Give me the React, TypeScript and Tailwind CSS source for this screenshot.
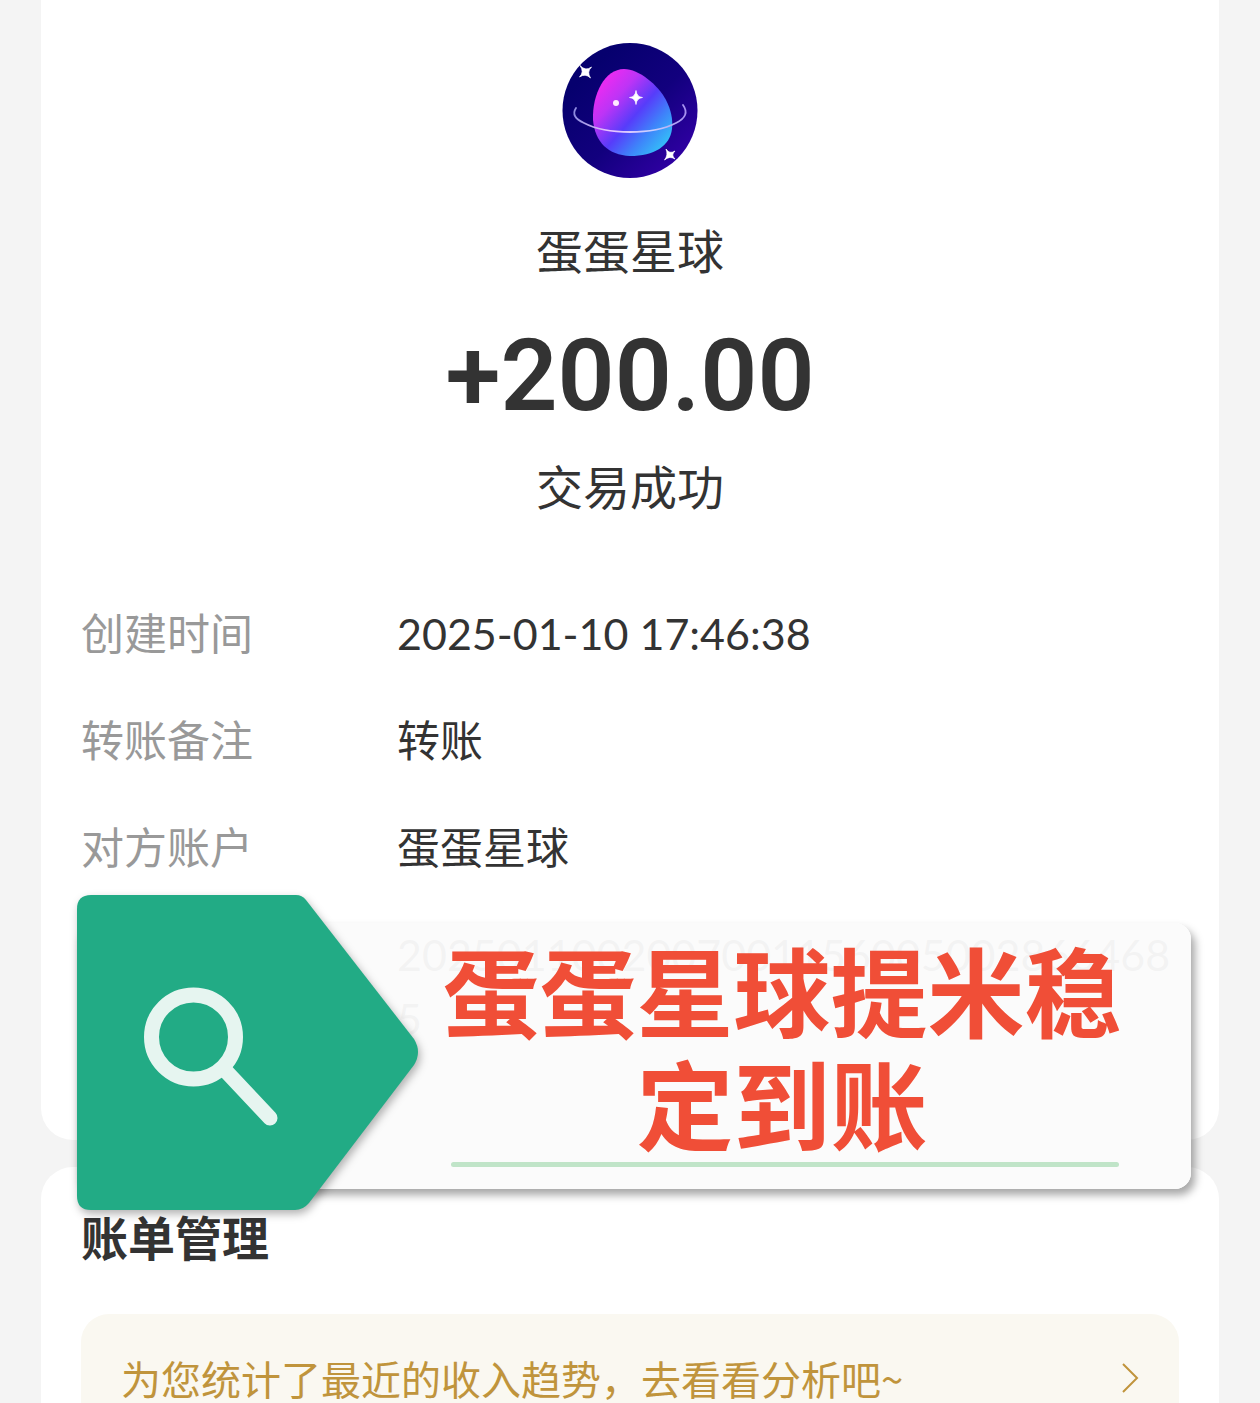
import { useId } from "react";

const details = [
  { label: "创建时间", value: "2025-01-10 17:46:38" },
  { label: "转账备注", value: "转账" },
  { label: "对方账户", value: "蛋蛋星球" },
  { label: "", value: "20250110020070011560050028664685" },
];

function PlanetLogo() {
  const id = useId();

  return (
    <svg viewBox="0 0 136 136" className="size-[136px]" role="img" aria-label="蛋蛋星球">
      <defs>
        <linearGradient id={`${id}-sky`} x1="0.2" y1="0.2" x2="0.9" y2="0.9">
          <stop offset="0" stopColor="#06006e" />
          <stop offset="0.5" stopColor="#12007e" />
          <stop offset="1" stopColor="#3200a6" />
        </linearGradient>
        <linearGradient id={`${id}-egg`} x1="0.12" y1="0.2" x2="0.85" y2="0.9">
          <stop offset="0" stopColor="#e52cf2" />
          <stop offset="0.22" stopColor="#bd34f6" />
          <stop offset="0.52" stopColor="#573cfa" />
          <stop offset="0.78" stopColor="#3e84fa" />
          <stop offset="1" stopColor="#35b8f8" />
        </linearGradient>
        <linearGradient id={`${id}-ring`} x1="0" y1="0" x2="1" y2="0">
          <stop offset="0" stopColor="#8d8be0" />
          <stop offset="0.3" stopColor="#e9c4ff" />
          <stop offset="0.7" stopColor="#c9d0ff" />
          <stop offset="1" stopColor="#a58ff0" />
        </linearGradient>
      </defs>
      <circle cx="68" cy="67.5" r="67.5" fill={`url(#${id}-sky)`} />
      <path
        d="M62 26 C77 26 96 42 104 57 C109 67 111 76 110 86 C108 103 92 113 68 113 C46 112 33 99 31 77 C30 51 43 26 62 26 Z"
        fill={`url(#${id}-egg)`}
      />
      <path
        d="M14 65 C10 71 13 76 22 80 C45 92 91 92 114 80 C124 75 126 69 121 62"
        fill="none"
        stroke={`url(#${id}-ring)`}
        strokeWidth="1.8"
        strokeLinecap="round"
      />
      <circle cx="54" cy="60" r="3" fill="#ffe9ff" />
      <path
        d="M74 47.500 Q74.700 54 80.500 54.500 Q74.700 55 74 61.500 Q73.300 55 67.500 54.500 Q73.300 54 74 47.500Z"
        fill="#fff"
        stroke="#fff"
        strokeWidth="0.7"
      />
      <path
        d="M18 22.500 Q23.500 28.500 29.500 24 Q24.500 29 28.500 35 Q23.500 30 17.500 34 Q22.500 29 18 22.500Z"
        fill="#fff"
        stroke="#fff"
        strokeWidth="0.7"
      />
      <path
        d="M104 106 Q107.500 111.500 113 108 Q108.500 112 113 116 Q107.500 112.500 102.500 117 Q106.500 112 104 106Z"
        fill="#fff"
        stroke="#fff"
        strokeWidth="0.7"
      />
    </svg>
  );
}

function Banner() {
  return (
    <div className="absolute top-[895px] right-[28px] left-[36px] h-[316px]">
      <div className="absolute inset-x-0 top-[28px] bottom-[22px] flex flex-col rounded-2xl bg-[#fbfbfb]/96 pr-[64px] pl-[360px] shadow-[4px_6px_8px_rgba(0,0,0,0.35)]">
        <p className="mt-2 text-center text-[97px] leading-[113px] font-bold text-[#f04e37]">
          蛋蛋星球提米稳定到账
        </p>
        <div className="mt-[5px] mr-2 ml-[14px] h-[5px] shrink-0 rounded-full bg-[#c0e4c8]" />
      </div>
      <svg
        viewBox="0 0 342 316"
        className="absolute top-0 left-0 h-[316px] w-[342px] overflow-visible drop-shadow-[2px_4px_4px_rgba(0,0,0,0.3)]"
        aria-hidden="true"
      >
        <path
          d="M14 0 H219 Q225 0 229 5 L337 144 Q345 157 337 170 L232 308 Q226 315 218 315 H14 Q0 315 0 301 V14 Q0 0 14 0Z"
          fill="#22ab85"
        />
        <circle cx="116.500" cy="142" r="42" fill="none" stroke="#e6f5f0" strokeWidth="15" />
        <path d="M146 173 L193 223" stroke="#e6f5f0" strokeWidth="15" strokeLinecap="round" />
      </svg>
    </div>
  );
}

export default function App() {
  return (
    <div className="h-screen overflow-hidden bg-[#f4f4f4] px-[41px] font-['Noto_Sans_CJK_SC',sans-serif] text-[#333]">
      <main className="relative flex flex-col gap-[27px]">
        <section className="flex flex-col rounded-b-[32px] bg-white px-10 pt-[43px] pb-[89px]">
          <header className="flex flex-col items-center">
            <PlanetLogo />
            <h1 className="mt-[38px] text-[47px] leading-[64px]">蛋蛋星球</h1>
            <p className="mt-[35px] font-['Roboto',sans-serif] text-[100px] leading-[120px] font-semibold">+200.00</p>
            <p className="mt-[17px] text-[47px] leading-[64px]">交易成功</p>
          </header>

          <dl className="mt-[85px] flex flex-col gap-[43px] font-['Lato','Noto_Sans_CJK_SC',sans-serif] text-[43px] leading-[64px]">
            {details.map((row) => (
              <div key={row.value} className="flex">
                <dt className="w-[316px] shrink-0 text-[#999]">{row.label}</dt>
                <dd className="min-w-0 break-all">{row.value}</dd>
              </div>
            ))}
          </dl>
        </section>

        <section className="rounded-t-[32px] bg-white px-10 pt-[37px] pb-10">
          <h2 className="text-[47px] leading-[64px] font-bold">账单管理</h2>
          <a
            href="#analysis"
            className="mt-[46px] flex items-center justify-between rounded-[28px] bg-[#faf8f1] px-10 py-[32px] text-[40px] leading-[64px] text-[#c0943c]"
          >
            为您统计了最近的收入趋势，去看看分析吧~
            <svg
              viewBox="0 0 18 30"
              className="h-[30px] w-[18px]"
              fill="none"
              stroke="currentColor"
              strokeWidth="2"
              aria-hidden="true"
            >
              <path d="M2 1 L16 15 L2 29" />
            </svg>
          </a>
        </section>

        <Banner />
      </main>
    </div>
  );
}
